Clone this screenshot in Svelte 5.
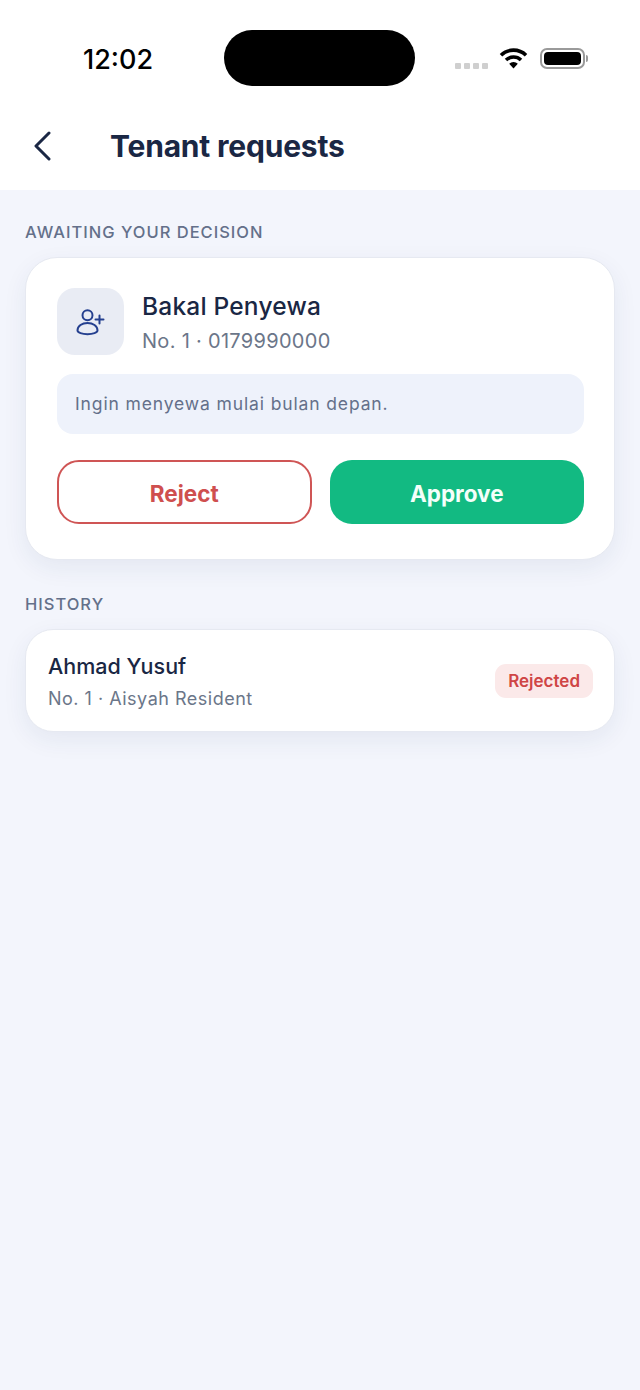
<script>
	const request = { name: 'Bakal Penyewa', meta: 'No. 1 · 0179990000', note: 'Ingin menyewa mulai bulan depan.' };
	const history = [{ name: 'Ahmad Yusuf', meta: 'No. 1 · Aisyah Resident', status: 'Rejected' }];
</script>

<div class="screen">
	<div class="top">
		<div class="status">
			<span class="time">12:02</span>
			<div class="island"></div>
			<div class="indicators">
				<div class="signal"><i></i><i></i><i></i><i></i></div>
				<svg class="wifi" width="29" height="22" viewBox="0 0 29 22">
					<path d="M2 8.200a18 18 0 0 1 25 0" fill="none" stroke="#000" stroke-width="3.600" />
					<path d="M7 13a11 11 0 0 1 15 0" fill="none" stroke="#000" stroke-width="3.600" />
					<path d="M10.200 16.700a6 6 0 0 1 8.600 0L14.500 21.500z" fill="#000" />
				</svg>
				<div class="battery"><div class="level"></div></div>
				<div class="nub"></div>
			</div>
		</div>
		<header>
			<button class="back" aria-label="Back">
				<svg width="20" height="30" viewBox="0 0 20 30">
					<path d="M17 2 L4 15 L17 28" fill="none" stroke="#1a2744" stroke-width="3" stroke-linecap="round" stroke-linejoin="round" />
				</svg>
			</button>
			<h1>Tenant requests</h1>
		</header>
	</div>

	<main>
		<h2>AWAITING YOUR DECISION</h2>
		<section class="card request">
			<div class="who">
				<div class="avatar">
					<svg width="32" height="32" viewBox="0 0 32 32" fill="none" stroke="#25408f" stroke-width="2" stroke-linecap="round">
						<circle cx="12.500" cy="9.200" r="5" />
						<path d="M2.500 24.500c0-4.600 4.600-7.600 10-7.600s10 3 10 7.600c0 2-4.600 3.700-10 3.700s-10-1.700-10-3.700z" />
						<path d="M24.500 9.500v8M20.500 13.500h8" />
					</svg>
				</div>
				<div class="who-text">
					<div class="name">{request.name}</div>
					<div class="meta">{request.meta}</div>
				</div>
			</div>
			<div class="note">{request.note}</div>
			<div class="actions">
				<button class="reject">Reject</button>
				<button class="approve">Approve</button>
			</div>
		</section>

		<h2 class="second">HISTORY</h2>
		{#each history as item}
			<section class="card row">
				<div>
					<div class="row-name">{item.name}</div>
					<div class="row-meta">{item.meta}</div>
				</div>
				<span class="badge">{item.status}</span>
			</section>
		{/each}
	</main>
</div>

<style>
	:global(body) {
		margin: 0;
		background: #f3f5fc;
	}
	.screen {
		width: 640px;
		height: 1390px;
		display: flex;
		flex-direction: column;
		overflow: hidden;
		font-family: Inter, "Liberation Sans", sans-serif;
		background: #f3f5fc;
	}
	.top {
		background: #fff;
		height: 190px;
		flex-shrink: 0;
	}
	.status {
		display: flex;
		align-items: center;
		height: 56px;
		padding: 30px 0 0 83px;
	}
	.time {
		width: 141px;
		padding-top: 2px;
		font-size: 27px;
		font-weight: 500;
		color: #000;
	}
	.island {
		width: 191px;
		height: 56px;
		border-radius: 28px;
		background: #000;
	}
	.indicators {
		display: flex;
		align-items: center;
		margin-left: 40px;
	}
	.signal {
		display: flex;
		gap: 3px;
		margin: 15px 11px 0 0;
	}
	.signal i {
		width: 6px;
		height: 6px;
		background: #cfcfcf;
		border-radius: 1px;
	}
	.battery {
		box-sizing: border-box;
		width: 45px;
		height: 21px;
		margin-left: 12px;
		border: 2px solid #9a9a9a;
		border-radius: 7px;
		padding: 2px;
	}
	.level {
		height: 100%;
		background: #000;
		border-radius: 4px;
	}
	.nub {
		width: 2px;
		height: 7px;
		margin-left: 1px;
		background: #9a9a9a;
		border-radius: 0 2px 2px 0;
	}
	header {
		display: flex;
		align-items: center;
		height: 60px;
		margin-top: 30px;
		padding-left: 32px;
	}
	.back {
		width: 78px;
		padding: 0;
		border: 0;
		background: none;
		text-align: left;
		line-height: 0;
	}
	h1 {
		margin: 0;
		font-size: 30px;
		font-weight: 700;
		letter-spacing: -0.2px;
		color: #1a2744;
	}
	main {
		padding: 32px 25px 0;
	}
	h2 {
		margin: 0 0 15px;
		font-size: 16.500px;
		line-height: 20px;
		font-weight: 500;
		letter-spacing: 1px;
		color: #64708a;
	}
	h2.second {
		margin-top: 34px;
	}
	.card {
		box-sizing: border-box;
		background: #fff;
		border: 1px solid #e6e9f1;
		box-shadow: 0 8px 24px rgba(30, 50, 100, 0.07);
	}
	.request {
		height: 303px;
		border-radius: 32px;
		padding: 30px 30px 0 31px;
	}
	.who {
		display: flex;
		align-items: center;
		gap: 18px;
	}
	.who-text {
		margin-top: -1px;
	}
	.name {
		font-size: 24.500px;
		line-height: 32px;
		font-weight: 500;
		letter-spacing: 0.2px;
		color: #1a2744;
	}
	.meta {
		margin-top: 7px;
		font-size: 20px;
		line-height: 24px;
		letter-spacing: 0.3px;
		color: #6b7689;
	}
	.avatar {
		display: flex;
		align-items: center;
		justify-content: center;
		width: 67px;
		height: 67px;
		border-radius: 18px;
		background: #e9ecf4;
	}
	.note {
		display: flex;
		align-items: center;
		height: 60px;
		margin-top: 19px;
		padding: 0 0 2px 18px;
		box-sizing: border-box;
		border-radius: 16px;
		background: #eef2fb;
		font-size: 17.500px;
		letter-spacing: 0.87px;
		color: #64708a;
	}
	.actions {
		display: grid;
		grid-template-columns: 1fr 1fr;
		gap: 18px;
		margin-top: 26px;
	}
	.actions button {
		height: 64px;
		padding: 3px 0 0;
		border-radius: 22px;
		font-family: inherit;
		font-size: 22.500px;
		font-weight: 700;
	}
	.reject {
		background: #fff;
		border: 2px solid #cf5555;
		color: #cf4f4f;
	}
	.approve {
		background: #12ba82;
		border: 0;
		color: #f4fffa;
	}
	.row {
		display: flex;
		align-items: center;
		justify-content: space-between;
		height: 103px;
		border-radius: 28px;
		padding: 0 21px 0 22px;
	}
	.row-name {
		font-size: 21.500px;
		line-height: 28px;
		font-weight: 500;
		color: #1a2744;
	}
	.row-meta {
		margin-top: 8px;
		font-size: 18px;
		line-height: 22px;
		letter-spacing: 0.5px;
		color: #6b7689;
	}
	.badge {
		display: flex;
		align-items: center;
		height: 34px;
		padding: 0 13px;
		border-radius: 11px;
		background: #fbe9e9;
		font-size: 17px;
		font-weight: 600;
		color: #cf4545;
	}
</style>
